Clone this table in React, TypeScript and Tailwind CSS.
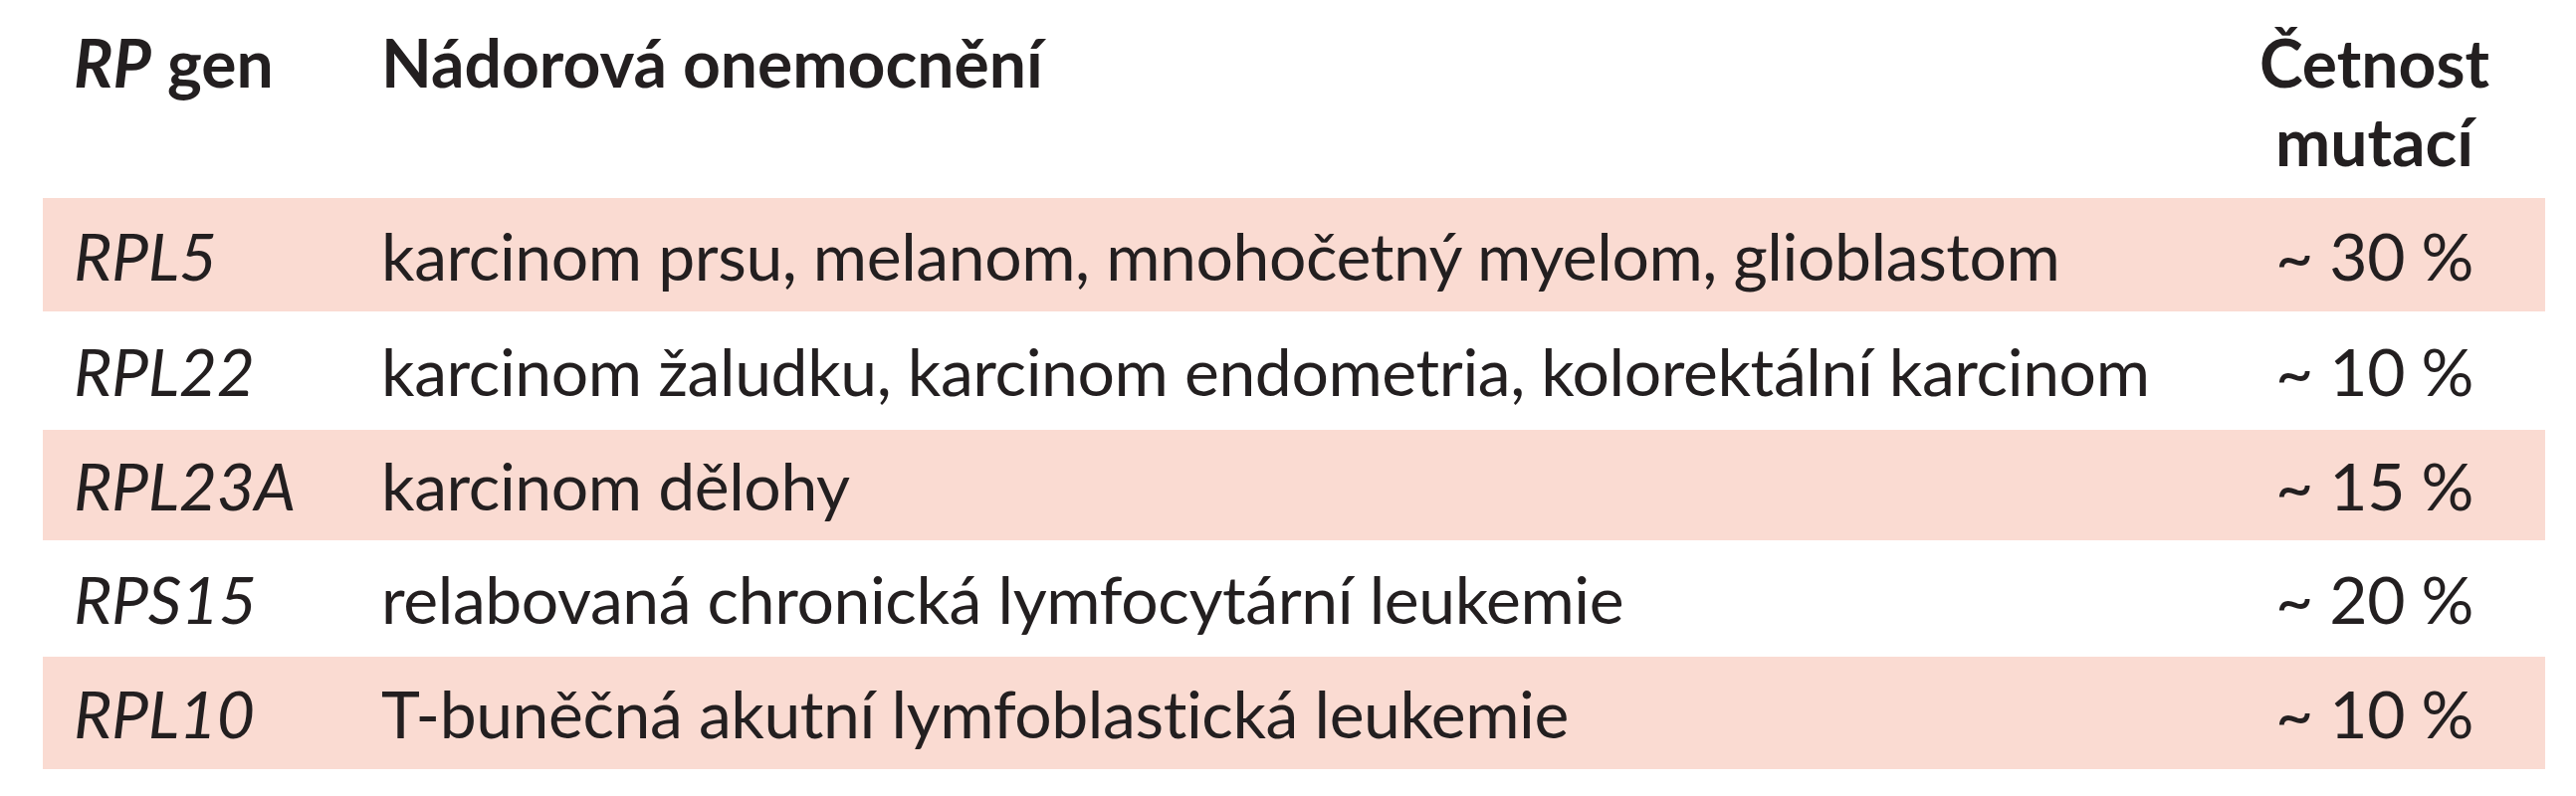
import React from "react";

type Row = { gene: string; disease: string; freq: string; h: string };

const rows: Row[] = [
  { gene: "RPL5", disease: "karcinom prsu, melanom, mnohočetný myelom, glioblastom", freq: "~ 30 %", h: "h-[114px]" },
  { gene: "RPL22", disease: "karcinom žaludku, karcinom endometria, kolorektální karcinom", freq: "~ 10 %", h: "h-[119px]" },
  { gene: "RPL23A", disease: "karcinom dělohy", freq: "~ 15 %", h: "h-[111px]" },
  { gene: "RPS15", disease: "relabovaná chronická lymfocytární leukemie", freq: "~ 20 %", h: "h-[117px]" },
  { gene: "RPL10", disease: "T-buněčná akutní lymfoblastická leukemie", freq: "~ 10 %", h: "h-[113px]" },
];

export default function App() {
  return (
    <div className="w-[2588px] h-[800px] bg-white text-[#231f20] text-[66px] leading-[79px] font-['Lato','Open_Sans','Liberation_Sans',sans-serif]">
      <div className="ml-[43px] w-[2514px]">
        {/* header */}
        <div className="grid grid-cols-[340px_1831px_343px] h-[199px] pt-[23px] font-bold">
          <div className="pl-[31px]">
            <span className="italic">RP</span> gen
          </div>
          <div>Nádorová onemocnění</div>
          <div className="text-center">
            Četnost
            <br />
            mutací
          </div>
        </div>

        {rows.map((r, i) => (
          <div
            key={r.gene}
            className={`grid grid-cols-[340px_1831px_343px] items-center tracking-[-0.4px] ${r.h} ${
              i % 2 === 0 ? "bg-[#fadbd2]" : "bg-white"
            }`}
          >
            <div className="pl-[31px] italic">{r.gene}</div>
            <div className="whitespace-nowrap">{r.disease}</div>
            <div className="text-center">{r.freq}</div>
          </div>
        ))}
      </div>
    </div>
  );
}
